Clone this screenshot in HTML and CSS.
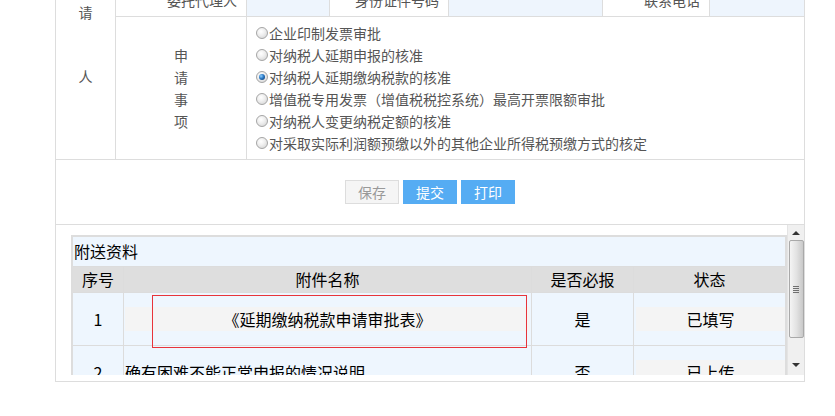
FILE: index.html
```html
<!DOCTYPE html>
<html lang="zh-CN">
<head>
  <meta charset="UTF-8" />
  <title>延期缴纳税款申请</title>
  <link rel="stylesheet" href="styles.css">
</head>
<body>
  <div class="form">
    <div class="cell side"><span>申</span><span>请</span><span>人</span></div>
    <div class="cell label">委托代理人</div>
    <div class="cell input"></div>
    <div class="cell label">身份证件号码</div>
    <div class="cell input"></div>
    <div class="cell label">联系电话</div>
    <div class="cell input"></div>

    <div class="cell item-label"><span>申</span><span>请</span><span>事</span><span>项</span></div>
    <div class="cell options">
      <label class="option"><span class="radio"></span>企业印制发票审批</label>
      <label class="option"><span class="radio"></span>对纳税人延期申报的核准</label>
      <label class="option"><span class="radio checked"></span>对纳税人延期缴纳税款的核准</label>
      <label class="option"><span class="radio"></span>增值税专用发票（增值税税控系统）最高开票限额审批</label>
      <label class="option"><span class="radio"></span>对纳税人变更纳税定额的核准</label>
      <label class="option"><span class="radio"></span>对采取实际利润额预缴以外的其他企业所得税预缴方式的核定</label>
    </div>

    <div class="cell actions">
      <span class="btn btn-gray">保存</span>
      <span class="btn btn-blue">提交</span>
      <span class="btn btn-blue">打印</span>
    </div>

    <div class="cell attach">
      <div class="scroll">
        <div class="scroll-content">
          <div class="attach-box">
            <div class="attach-table">
              <div class="attach-title">附送资料</div>
              <div class="th">序号</div>
              <div class="th">附件名称</div>
              <div class="th">是否必报</div>
              <div class="th">状态</div>

              <div class="td center">1</div>
              <div class="td"><span class="bar center">《延期缴纳税款申请审批表》</span></div>
              <div class="td center">是</div>
              <div class="td"><span class="bar bar-status center">已填写</span></div>

              <div class="td center">2</div>
              <div class="td left">确有困难不能正常申报的情况说明</div>
              <div class="td center">否</div>
              <div class="td"><span class="bar bar-status center">已上传</span></div>

              <div class="td center">3</div>
              <div class="td left">所有银行存款账户的对账单</div>
              <div class="td center">是</div>
              <div class="td"><span class="bar bar-status center">未上传</span></div>
            </div>
            <div class="highlight"></div>
          </div>
        </div>
        <div class="scrollbar">
          <span class="arrow arrow-up"></span>
          <div class="thumb"><span class="grip"></span></div>
          <span class="arrow arrow-down"></span>
        </div>
      </div>
    </div>
  </div>
</body>
</html>
```

FILE: styles.css
```css
body {
  margin: 0;
  background: #fff;
  font-family: "Noto Sans CJK SC", "Noto Sans", sans-serif;
  overflow: hidden;
}
.form {
  box-sizing: border-box;
  width: 750px;
  margin: -17px 0 0 55px;
  display: grid;
  grid-template-columns: 59px 130px 82px 118px 153px 106px 94px;
  grid-template-rows: 32px 142px 64px 156px;
  gap: 1px;
  background: #ddd;
  border: 1px solid #ddd;
  font-size: 14px;
  color: #555;
}
.cell {
  background: #fff;
}
.side {
  grid-row: 1 / 3;
  display: flex;
  flex-direction: column;
  justify-content: flex-end;
  align-items: center;
  gap: 44px;
  padding-bottom: 73px;
  line-height: 20px;
}
.label {
  text-align: right;
  padding-right: 9px;
  line-height: 32px;
}
.input {
  background: #eef5fd;
}
.item-label {
  display: flex;
  flex-direction: column;
  justify-content: center;
  align-items: center;
  line-height: 22px;
}
.options {
  grid-column: 3 / 8;
  display: flex;
  flex-direction: column;
  justify-content: center;
  padding-left: 9px;
  line-height: 22px;
}
.option {
  display: flex;
  align-items: center;
}
.radio {
  position: relative;
  box-sizing: border-box;
  width: 12px;
  height: 12px;
  margin-right: 1px;
  border-radius: 50%;
  border: 1px solid #a5a5a5;
  background: radial-gradient(circle at 40% 35%, #fff 0%, #f0f0f0 40%, #cfcfcf 100%);
}
.radio.checked::after {
  content: "";
  position: absolute;
  left: 2px;
  top: 2px;
  width: 6px;
  height: 6px;
  border-radius: 50%;
  background: radial-gradient(circle at 35% 35%, #8fd0ff 0%, #2a78c4 45%, #0b2f5c 100%);
}
.actions {
  grid-column: 1 / 8;
  display: flex;
  justify-content: center;
  align-items: center;
  gap: 4px;
}
.btn {
  box-sizing: border-box;
  width: 54px;
  height: 24px;
  line-height: 24px;
  text-align: center;
  font-size: 14px;
}
.btn-gray {
  background: #f5f5f5;
  border: 1px solid #ddd;
  line-height: 22px;
  color: #999;
}
.btn-blue {
  background: #55acf3;
  color: #fff;
}
.attach {
  grid-column: 1 / 8;
  padding-bottom: 6px;
}
.scroll {
  display: flex;
  height: 150px;
}
.scroll-content {
  flex: 1;
  overflow: hidden;
  padding: 10px 0 0 15px;
}
.attach-box {
  position: relative;
  border: 2px solid #ddd;
  font-size: 16px;
  color: #000;
}
.attach-table {
  display: grid;
  grid-template-columns: 50px 407px 101px 151px;
  gap: 1px;
  background: #dcdcdc;
}
.attach-title {
  grid-column: 1 / -1;
  background: #eef6fe;
  height: 29px;
  line-height: 29px;
  padding-left: 1px;
}
.th {
  background: #dedede;
  height: 25px;
  line-height: 25px;
  text-align: center;
}
.td {
  background: #eef6fe;
  height: 52px;
  display: flex;
  align-items: center;
}
.td.center {
  justify-content: center;
}
.td.left {
  padding-left: 1px;
}
.bar {
  flex: 1;
  height: 24px;
  line-height: 24px;
  margin: 0 1px;
  background: #f4f4f4;
  text-align: center;
}
.bar-status {
  margin: 0 0 0 2px;
}
.highlight {
  position: absolute;
  left: 79px;
  top: 58px;
  width: 375px;
  height: 53px;
  box-sizing: border-box;
  border: 1px solid #e8343a;
}
.scrollbar {
  width: 17px;
  background: #f0f0f0;
  border-left: 1px solid #e4e4e4;
  box-sizing: border-box;
  display: flex;
  flex-direction: column;
  align-items: center;
}
.arrow {
  width: 0;
  height: 0;
  border-left: 4px solid transparent;
  border-right: 4px solid transparent;
}
.arrow-up {
  margin: 6px 0 5px;
  border-bottom: 4px solid #333;
}
.arrow-down {
  margin: auto 0 8px;
  border-top: 4px solid #333;
}
.thumb {
  box-sizing: border-box;
  width: 15px;
  height: 98px;
  border: 1px solid #a9a9a9;
  border-radius: 2px;
  background: linear-gradient(to right, #f4f4f4, #e2e2e2 50%, #c9c9c9);
  display: flex;
  align-items: center;
  justify-content: center;
}
.grip {
  width: 6px;
  height: 7px;
  background: repeating-linear-gradient(to bottom, #6f6f6f 0, #6f6f6f 1px, transparent 1px, transparent 2px);
}
```
